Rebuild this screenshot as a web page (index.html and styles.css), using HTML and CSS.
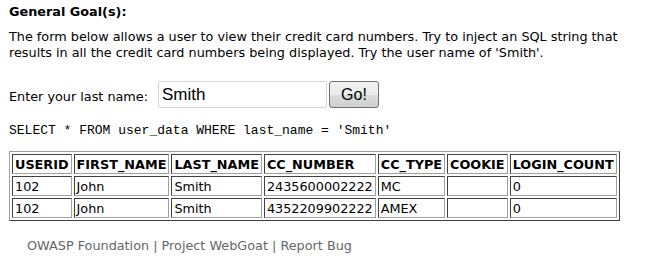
FILE: index.html
```html
<!DOCTYPE html>
<html lang="en">
<head>
    <meta charset="UTF-8">
    <title>String SQL Injection</title>
    <link rel="stylesheet" href="styles.css">
</head>
<body>
    <div class="lesson">
        <h2 class="goal-title">General Goal(s):</h2>
        <p class="goal-text">The form below allows a user to view their credit card numbers. Try to inject an SQL string that results in all the credit card numbers being displayed. Try the user name of 'Smith'.</p>

        <form class="lookup">
            <label for="account_name">Enter your last name:</label>
            <input type="text" id="account_name" class="name-input" value="Smith">
            <button type="button" class="go-btn">Go!</button>
        </form>

        <p class="query">SELECT * FROM user_data WHERE last_name = 'Smith'</p>

        <table class="results">
            <tr>
                <th>USERID</th>
                <th>FIRST_NAME</th>
                <th>LAST_NAME</th>
                <th>CC_NUMBER</th>
                <th>CC_TYPE</th>
                <th>COOKIE</th>
                <th>LOGIN_COUNT</th>
            </tr>
            <tr>
                <td>102</td>
                <td>John</td>
                <td>Smith</td>
                <td>2435600002222</td>
                <td>MC</td>
                <td></td>
                <td>0</td>
            </tr>
            <tr>
                <td>102</td>
                <td>John</td>
                <td>Smith</td>
                <td>4352209902222</td>
                <td>AMEX</td>
                <td></td>
                <td>0</td>
            </tr>
        </table>
    </div>

    <div class="footer">
        <a href="#">OWASP Foundation</a> | <a href="#">Project WebGoat</a> | <a href="#">Report Bug</a>
    </div>
</body>
</html>
```

FILE: styles.css
```css
body {
    font-family: "DejaVu Sans", Verdana, sans-serif;
    font-size: 12.8px;
    margin: 0;
    padding: 0;
    background-color: #fff;
    color: #000;
}
.lesson {
    padding: 0 9px;
}
.goal-title {
    font-size: 12.8px;
    font-weight: bold;
    margin: 0;
    padding-top: 4px;
    line-height: 16px;
}
.goal-text {
    margin: 9px 0 0;
    line-height: 16px;
}
.lookup {
    display: flex;
    align-items: center;
    margin-top: 20px;
}
.lookup label {
    margin-right: 10px;
    padding-top: 4px;
}
.name-input {
    width: 169px;
    height: 27px;
    padding: 0 3px;
    border: 1px solid #d5d5d5;
    border-radius: 2px;
    font-family: "Liberation Sans", Arial, sans-serif;
    font-size: 17px;
    box-sizing: border-box;
}
.go-btn {
    margin-left: 2px;
    width: 50px;
    height: 27px;
    border: 1px solid #707070;
    border-radius: 3px;
    background: linear-gradient(#f2f2f2, #ebebeb 50%, #dddddd 51%, #cfcfcf);
    font-family: "Liberation Sans", Arial, sans-serif;
    font-size: 16px;
    padding: 0;
}
.query {
    font-family: "Liberation Mono", "Courier New", monospace;
    font-size: 13px;
    margin: 15px 0 0;
}
.results {
    margin-top: 13px;
    border-collapse: separate;
    border-spacing: 2px;
    border: 1px solid;
    border-color: #a0a0a0 #404040 #404040 #a0a0a0;
}
.results th,
.results td {
    border: 1px solid;
    border-color: #404040 #a0a0a0 #a0a0a0 #404040;
    padding: 1px 2px;
    text-align: left;
    height: 16px;
    white-space: nowrap;
}
.results th {
    font-weight: bold;
}
.footer {
    margin-top: 17px;
    padding-left: 27px;
    color: #666;
}
.footer a {
    color: #666;
    text-decoration: none;
}
```
